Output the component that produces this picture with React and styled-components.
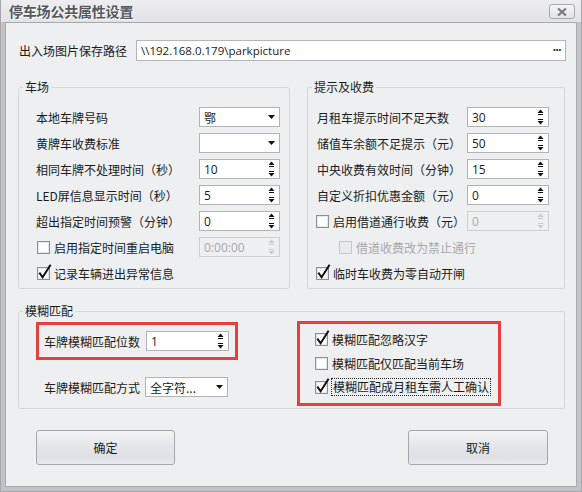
import React from 'react';
import styled, { createGlobalStyle } from 'styled-components';

const Global = createGlobalStyle`
  html, body { margin: 0; padding: 0; background: #ffffff; }
  body {
    font-family: "Noto Sans CJK SC", "Noto Sans", sans-serif;
    font-size: 12px;
    color: #1b1b1b;
  }
  * { box-sizing: border-box; }
`;

const Window = styled.div`
  width: 582px;
  height: 492px;
  display: flex;
  flex-direction: column;
  background: #c2c3c7;
  padding: 0 4px 4px;
  border-left: 1px solid #a6a7ab;
  border-right: 1px solid #a6a7ab;
  border-bottom: 1px solid #a6a7ab;
`;

const TitleBar = styled.div`
  height: 22px;
  margin: 0 -4px;
  padding: 0 6px 0 8px;
  display: flex;
  align-items: center;
  justify-content: space-between;
  background: linear-gradient(#eeeef0, #e2e3e6);
`;

const Title = styled.div`
  font-size: 14px;
  font-weight: bold;
  color: #55585c;
  text-shadow: 1px 1px 0 #ffffff;
  letter-spacing: -0.2px;
`;

const CloseButton = styled.div`
  width: 26px;
  height: 15px;
  margin-top: 1px;
  border: 1px solid #a9aaae;
  border-radius: 3px;
  background: linear-gradient(#f6f6f7, #e2e3e6);
  display: flex;
  align-items: center;
  justify-content: center;
`;

const Panel = styled.div`
  flex: 1;
  background: #eeeff1;
  border: 1px solid #a8a9ae;
  display: flex;
  flex-direction: column;
  padding: 0 10px 0 12px;
`;

const PathRow = styled.div`
  margin-top: 17px;
  display: flex;
  align-items: center;
  gap: 9px;
  padding-left: 1px;
`;

const PathInput = styled.div`
  flex: 1;
  height: 21px;
  border: 1px solid #b3b5b9;
  background: #ffffff;
  display: flex;
  align-items: center;
  justify-content: space-between;
  padding: 0 4px 0 4px;
  font-family: "Open Sans", "Noto Sans CJK SC", sans-serif;
  font-size: 11.5px;
`;

const Dots = styled.span`
  font-weight: bold;
  letter-spacing: -0.5px;
  padding-bottom: 3px;
`;

const TopRow = styled.div`
  display: flex;
  gap: 17px;
  margin-top: 18px;
`;

const Group = styled.fieldset`
  margin: 0;
  padding: 0;
  min-width: 0;
  width: ${p => p.$w}px;
  border: 1px solid #d3d6da;
  border-radius: 3px;
`;

const Legend = styled.legend`
  padding: 0 2px;
  margin-left: 4px;
  line-height: 16px;
  font-size: 12px;
  color: #1b1b1b;
`;

const FormGrid = styled.div`
  display: grid;
  grid-template-columns: 1fr ${p => p.$field}px;
  grid-auto-rows: 20px;
  row-gap: 6px;
  align-items: center;
  padding: ${p => p.$pad};
`;

const Label = styled.span`
  white-space: nowrap;
  ${p => p.$span && 'grid-column: 1 / -1;'}
`;

const FieldBox = styled.div`
  height: 20px;
  width: ${p => (p.$w ? `${p.$w}px` : 'auto')};
  border: 1px solid ${p => (p.$disabled ? '#cdd0d3' : '#b1b3b7')};
  background: ${p => (p.$disabled ? '#eeeff1' : '#ffffff')};
  color: ${p => (p.$disabled ? '#a8a9ac' : '#1b1b1b')};
  display: flex;
  align-items: center;
  justify-content: space-between;
  padding: 0 4px 0 4px;
  font-family: "Open Sans", "Noto Sans CJK SC", sans-serif;
  font-size: 12px;
  flex-shrink: 0;
`;

const FieldText = styled.span`
  white-space: nowrap;
  font-family: "Noto Sans CJK SC", "Open Sans", sans-serif;
`;

const CheckRow = styled.label`
  display: inline-flex;
  align-items: center;
  gap: 4px;
  margin-left: ${p => p.$indent || 0}px;
  color: ${p => (p.$disabled ? '#a8a9ac' : '#1b1b1b')};
  white-space: nowrap;
  ${p => p.$span && 'grid-column: 1 / -1;'}
`;

const FocusText = styled.span`
  border: 1px dotted #222;
  padding: 0 1px;
  line-height: 16px;
  margin-left: -1px;
`;

const BottomGroupBody = styled.div`
  display: grid;
  grid-template-columns: 278px 204px;
  align-items: start;
  padding: 2px 0 2px 0;
`;

const LeftCol = styled.div`
  padding-left: 17px;
  padding-top: 1px;
  display: flex;
  flex-direction: column;
`;

const RedBox = styled.div`
  border: 3px solid #e6403d;
  width: ${p => p.$w}px;
  padding: ${p => p.$pad};
  display: flex;
  flex-direction: ${p => (p.$column ? 'column' : 'row')};
  align-items: ${p => (p.$column ? 'flex-start' : 'center')};
  gap: ${p => p.$gap}px;
`;

const InlineRow = styled.div`
  display: flex;
  align-items: center;
  gap: 5px;
  margin-top: 17px;
  padding-left: 8px;
`;

const CheckLine = styled.div`
  height: 20px;
  display: flex;
  align-items: center;
`;

const ButtonRow = styled.div`
  display: flex;
  justify-content: space-between;
  margin-top: 21px;
  padding: 0 18px 0 18px;
`;

const Button = styled.button`
  width: ${p => p.$w}px;
  height: 35px;
  border: 1px solid #a6a7ac;
  border-radius: 3px;
  background: linear-gradient(#f3f3f5, #e3e4e8 55%, #e0e1e5 80%, #e8e9ec);
  font-family: "Noto Sans CJK SC", sans-serif;
  font-size: 12px;
  color: #1b1b1b;
  padding: 0;
`;

const ArrowDown = ({ color = '#111' }) => (
  <svg width="7" height="4" viewBox="0 0 7 4">
    <path d="M0 0 H7 L3.5 4 Z" fill={color} />
  </svg>
);

const SpinArrows = ({ color = '#111' }) => (
  <svg width="7" height="16" viewBox="0 0 7 16">
    <path d="M0.5 4 L3.5 0.5 L6.5 4 Z" fill={color} />
    <rect x="1" y="5" width="5" height="1" fill={color} />
    <rect x="1" y="10" width="5" height="1" fill={color} />
    <path d="M0.5 12 L6.5 12 L3.5 15.5 Z" fill={color} />
  </svg>
);

const CheckIcon = ({ checked, disabled }) => (
  <svg width="13" height="13" viewBox="0 0 13 13" style={{ overflow: 'visible', flexShrink: 0 }}>
    <rect
      x="0.5"
      y="0.5"
      width="12"
      height="12"
      fill={disabled ? '#e9eaec' : '#ffffff'}
      stroke={disabled ? '#c6c8cb' : '#8d8f92'}
    />
    {!disabled && <rect x="1.5" y="1.5" width="10" height="10" fill="none" stroke="#e6e7e9" />}
    {checked && (
      <path d="M2.3 5.6 L5.6 10.3 L13.6 -2.2" fill="none" stroke="#111" strokeWidth="2" />
    )}
  </svg>
);

const Combo = ({ value, w }) => (
  <FieldBox $w={w}>
    <FieldText>{value}</FieldText>
    <ArrowDown />
  </FieldBox>
);

const Spin = ({ value, w, disabled }) => (
  <FieldBox $w={w} $disabled={disabled}>
    <span>{value}</span>
    <SpinArrows color={disabled ? '#c9cacd' : '#111'} />
  </FieldBox>
);

const Check = ({ checked, disabled, children, indent, span, focus }) => (
  <CheckRow $indent={indent} $span={span} $disabled={disabled}>
    <CheckIcon checked={checked} disabled={disabled} />
    {focus ? <FocusText>{children}</FocusText> : <span>{children}</span>}
  </CheckRow>
);

export default function App() {
  return (
    <>
      <Global />
      <Window>
        <TitleBar>
          <Title>停车场公共属性设置</Title>
          <CloseButton>
            <svg width="10" height="8" viewBox="0 0 10 8">
              <path d="M1 0.5 L9 7.5 M9 0.5 L1 7.5" stroke="#7b7c80" strokeWidth="2.2" />
            </svg>
          </CloseButton>
        </TitleBar>
        <Panel>
          <PathRow>
            <span>出入场图片保存路径</span>
            <PathInput>
              <span>\\192.168.0.179\parkpicture</span>
              <Dots>···</Dots>
            </PathInput>
          </PathRow>

          <TopRow>
            <Group $w={272}>
              <Legend>车场</Legend>
              <FormGrid $field={81} $pad="12px 9px 5px 17px">
                <Label>本地车牌号码</Label>
                <Combo value="鄂" />
                <Label>黄牌车收费标准</Label>
                <Combo value="" />
                <Label>相同车牌不处理时间（秒）</Label>
                <Spin value="10" />
                <Label>LED屏信息显示时间（秒）</Label>
                <Spin value="5" />
                <Label>超出指定时间预警（分钟）</Label>
                <Spin value="0" />
                <Check indent={1}>启用指定时间重启电脑</Check>
                <Spin value="0:00:00" disabled />
                <Check indent={1} checked span>记录车辆进出异常信息</Check>
              </FormGrid>
            </Group>

            <Group $w={258}>
              <Legend>提示及收费</Legend>
              <FormGrid $field={82} $pad="12px 15px 5px 9px">
                <Label>月租车提示时间不足天数</Label>
                <Spin value="30" />
                <Label>储值车余额不足提示（元）</Label>
                <Spin value="50" />
                <Label>中央收费有效时间（分钟）</Label>
                <Spin value="15" />
                <Label>自定义折扣优惠金额（元）</Label>
                <Spin value="0" />
                <Check indent={-1}>启用借道通行收费（元）</Check>
                <Spin value="0" disabled />
                <Check indent={22} disabled span>借道收费改为禁止通行</Check>
                <Check indent={-1} checked span>临时车收费为零自动开闸</Check>
              </FormGrid>
            </Group>
          </TopRow>

          <TopRow style={{ marginTop: 14 }}>
            <Group $w={547}>
              <Legend>模糊匹配</Legend>
              <BottomGroupBody>
                <LeftCol>
                  <RedBox $w={202} $pad="6px 6px 6px 5px" $gap={6}>
                    <span>车牌模糊匹配位数</span>
                    <Spin value="1" w={83} />
                  </RedBox>
                  <InlineRow>
                    <span>车牌模糊匹配方式</span>
                    <Combo value="全字符..." w={83} />
                  </InlineRow>
                </LeftCol>
                <RedBox $w={204} $pad="5px 10px 6px 15px" $gap={4} $column>
                  <CheckLine>
                    <Check checked>模糊匹配忽略汉字</Check>
                  </CheckLine>
                  <CheckLine>
                    <Check>模糊匹配仅匹配当前车场</Check>
                  </CheckLine>
                  <CheckLine>
                    <Check checked focus>模糊匹配成月租车需人工确认</Check>
                  </CheckLine>
                </RedBox>
              </BottomGroupBody>
            </Group>
          </TopRow>

          <ButtonRow>
            <Button $w={139}>确定</Button>
            <Button $w={140}>取消</Button>
          </ButtonRow>
        </Panel>
      </Window>
    </>
  );
}
